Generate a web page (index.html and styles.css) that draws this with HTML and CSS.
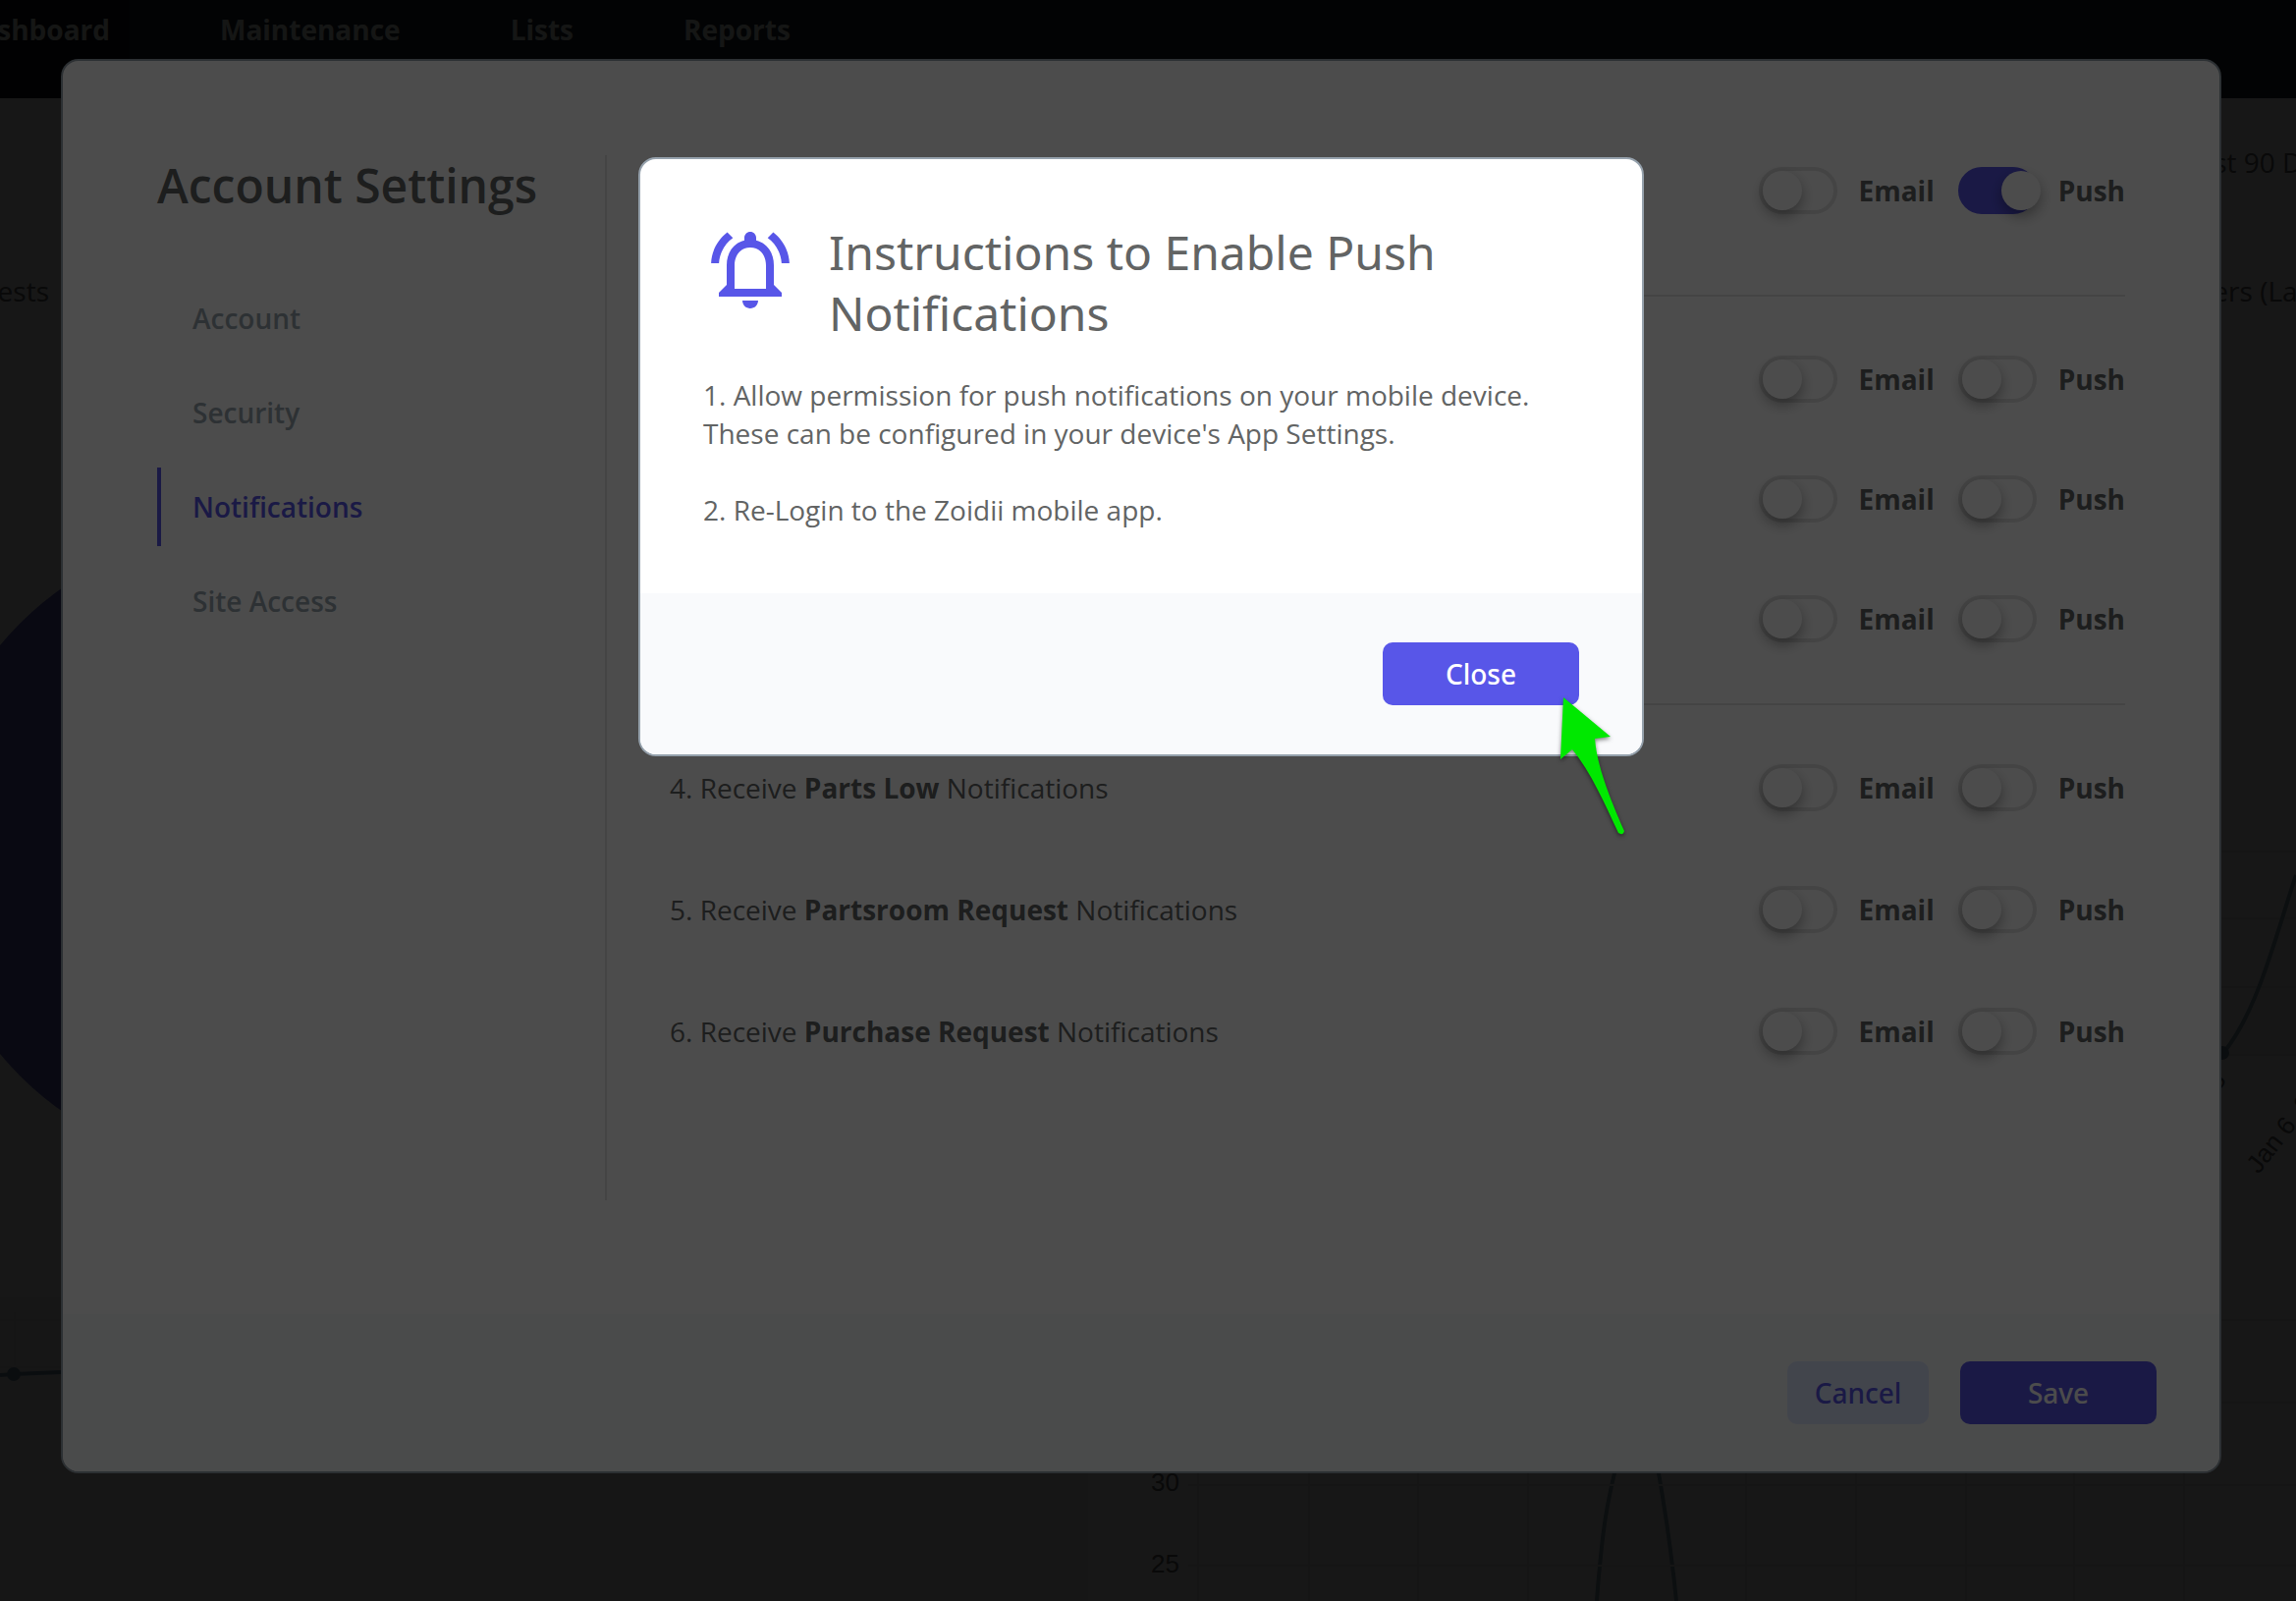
FILE: index.html
```html
<!DOCTYPE html>
<html lang="en">
<head>
<meta charset="utf-8">
<title>Account Settings</title>
<link rel="stylesheet" href="styles.css">
</head>
<body>
<div class="dashboard">
  <header class="topbar">
    <nav class="topnav">
      <a class="topnav-link topnav-current" href="#">Dashboard</a>
      <a class="topnav-link" href="#">Maintenance</a>
      <a class="topnav-link" href="#">Lists</a>
      <a class="topnav-link" href="#">Reports</a>
    </nav>
  </header>
  <div class="filters"><span class="range">Last 90 Days</span></div>
  <div class="card-heads">
    <h2 class="clip-start">Requests</h2>
    <h2 class="clip-end">Orders (Last</h2>
  </div>
  <div class="charts">
    <svg class="pie" width="652" height="652" viewBox="0 0 652 652" aria-hidden="true"><circle cx="326" cy="326" r="326" fill="#6465c4"/></svg>
    <svg class="line-chart" width="84" height="560" viewBox="0 0 84 560" aria-hidden="true">
      <path d="M10 392C45 350 64 270 84 211V394H10Z" fill="#f0f0f0"/>
      <path d="M0 187H84M0 255H84M0 325H84M0 394H84" stroke="#e6e6e6" stroke-width="2"/>
      <path d="M10 392C45 350 64 270 84 211" fill="none" stroke="#85a0b5" stroke-width="4"/>
      <circle cx="9" cy="392" r="7" fill="#7090aa"/>
      <text class="axis" text-anchor="end" transform="translate(14 420) rotate(-52)">Jan 5, 2023</text>
      <text class="axis" transform="translate(46 516) rotate(-52)">Jan 6, 2023</text>
    </svg>
  </div>
  <div class="lower">
    <svg class="trend" width="1080" height="310" viewBox="0 0 1080 310" aria-hidden="true">
      <path d="M0 24H1080M0 72H1080" stroke="#e4e4e4" stroke-width="2"/>
      <path d="M15 16V70" stroke="#e4e4e4" stroke-width="2"/>
      <path d="M0 80L14 79L62 77" fill="none" stroke="#7090aa" stroke-width="4"/>
      <circle cx="14" cy="79" r="7" fill="#7090aa"/>
    </svg>
    <svg class="peak" width="1230" height="310" viewBox="-30 0 1230 310" aria-hidden="true">
      <path d="M488 310C494 230 500 205 506 180C515 110 542 110 551 180C558 220 564 260 569 310" fill="#f4f4f4" stroke="#85a0b5" stroke-width="4"/>
      <path d="M72 24H1200M72 108H1200M72 192H1200M72 274H1200M82 0V310M195 0V310M306 0V310M418 0V310M640 0V310M752 0V310M864 0V310M974 0V310M1086 0V310" stroke="#e4e4e4" stroke-width="2"/>
      <text class="axis" x="34" y="198">30</text>
      <text class="axis" x="34" y="281">25</text>
    </svg>
  </div>
</div>

<div class="overlay">
  <section class="dialog settings" role="dialog" aria-labelledby="settings-title">
    <div class="settings-body">
      <aside class="sidebar">
        <h1 class="title title-strong" id="settings-title">Account Settings</h1>
        <nav class="tabs">
          <a class="tab" href="#">Account</a>
          <a class="tab" href="#">Security</a>
          <a class="tab tab-active" href="#" aria-current="page">Notifications</a>
          <a class="tab" href="#">Site Access</a>
        </nav>
      </aside>
      <form class="options">
        <div class="group">
          <div class="row"><span class="switches"><label class="switch"><input type="checkbox">Email</label><label class="switch"><input type="checkbox" checked>Push</label></span></div>
        </div>
        <div class="group">
          <div class="row"><span class="switches"><label class="switch"><input type="checkbox">Email</label><label class="switch"><input type="checkbox">Push</label></span></div>
          <div class="row"><span class="switches"><label class="switch"><input type="checkbox">Email</label><label class="switch"><input type="checkbox">Push</label></span></div>
          <div class="row"><span class="switches"><label class="switch"><input type="checkbox">Email</label><label class="switch"><input type="checkbox">Push</label></span></div>
        </div>
        <div class="group group-last">
          <div class="row"><span>4. Receive <b>Parts Low</b> Notifications</span><span class="switches"><label class="switch"><input type="checkbox">Email</label><label class="switch"><input type="checkbox">Push</label></span></div>
          <div class="row"><span>5. Receive <b>Partsroom Request</b> Notifications</span><span class="switches"><label class="switch"><input type="checkbox">Email</label><label class="switch"><input type="checkbox">Push</label></span></div>
          <div class="row"><span>6. Receive <b>Purchase Request</b> Notifications</span><span class="switches"><label class="switch"><input type="checkbox">Email</label><label class="switch"><input type="checkbox">Push</label></span></div>
        </div>
      </form>
    </div>
    <footer class="actions">
      <button class="button button-quiet" type="button">Cancel</button>
      <button class="button" type="button">Save</button>
    </footer>
  </section>
</div>

<div class="overlay overlay-front">
  <section class="dialog notice" role="dialog" aria-labelledby="notice-title">
    <div class="notice-body">
      <div class="notice-head">
        <svg class="bell" width="96" height="96" viewBox="0 0 24 24" fill="#5856e8" aria-hidden="true">
          <path d="M12 22c1.100 0 2-.9 2-2h-4c0 1.100.9 2 2 2zm6-6v-5c0-3.070-1.630-5.640-4.500-6.320V4c0-.83-.67-1.500-1.500-1.500s-1.500.67-1.500 1.500v.68C7.640 5.360 6 7.920 6 11v5l-2 2v1h16v-1l-2-2zm-2 1H8v-6c0-2.480 1.510-4.500 4-4.500s4 2.020 4 4.500v6zM7.580 4.080L6.150 2.650C3.750 4.480 2.170 7.300 2.030 10.500h2c.15-2.650 1.510-4.970 3.550-6.420zm12.390 6.420h2c-.15-3.200-1.730-6.020-4.120-7.850l-1.420 1.430c2.020 1.450 3.390 3.770 3.540 6.420z"/>
        </svg>
        <h2 class="title" id="notice-title">Instructions to Enable Push Notifications</h2>
      </div>
      <p>1. Allow permission for push notifications on your mobile device. These can be configured in your device's App Settings.</p>
      <p>2. Re-Login to the Zoidii mobile app.</p>
    </div>
    <footer class="actions actions-roomy">
      <button class="button" type="button">Close</button>
      <svg class="pointer" width="80" height="150" viewBox="0 0 80 150" aria-hidden="true">
        <path d="M12 8L60 48L44 50C46 76 58 108 74 144Q73 149 68 146C54 116 40 84 21 61L9 71Z" fill="#00e800"/>
      </svg>
    </footer>
  </section>
</div>
</body>
</html>
```
FILE: styles.css
```css
* { box-sizing: border-box; }

body {
  margin: 0;
  min-height: 100vh;
  overflow: hidden;
  font-family: "Open Sans", "Noto Sans", sans-serif;
  font-size: 28px;
  line-height: 39px;
  color: #626464;
}

a { color: inherit; text-decoration: none; }
h1, h2, p { margin: 0; font-weight: 400; }

/* Dashboard behind the dialogs */
.dashboard {
  height: 100vh;
  overflow: hidden;
  background: #fff;
  color: #606060;
}
.topbar { height: 100px; background: #1c242e; }
.topnav { display: flex; height: 100px; }
.topnav-link {
  padding: 11px 56px 0;
  font-weight: 700;
  color: #e8f0e8;
}
.topnav-current {
  display: flex;
  justify-content: flex-end;
  width: 132px;
  margin-right: 36px;
  padding: 11px 20px 0 0;
  background: #0c1016;
}
.filters {
  display: flex;
  justify-content: flex-end;
  height: 100px;
  padding-top: 46px;
}
.card-heads {
  display: flex;
  justify-content: space-between;
  height: 180px;
  padding-top: 77px;
  background: #f8f8f8;
}
.card-heads h2 { font-size: 28px; }
.clip-start {
  display: flex;
  justify-content: flex-end;
  width: 50px;
}
.clip-end { width: 135px; white-space: nowrap; }
.range { width: 114px; white-space: nowrap; }
.charts {
  display: flex;
  justify-content: space-between;
  align-items: flex-start;
  height: 940px;
  padding-top: 159px;
}
.pie { margin-left: -75px; }
.line-chart { margin-top: 141px; overflow: visible; }
.lower {
  display: flex;
  justify-content: space-between;
  background: #f2f2f2;
}
.peak { background: #fff; }
.axis { font: 26px "Liberation Sans", sans-serif; fill: #606060; }

/* Dialogs */
.overlay {
  position: fixed;
  inset: 0;
  display: flex;
  justify-content: center;
  align-items: flex-start;
  padding: 60px 76px 60px 62px;
  background: rgba(0, 0, 0, .7);
}
.overlay-front { padding-top: 160px; }
.dialog {
  border: 2px solid #95a1ac;
  border-radius: 18px;
  background: #fff;
}
.settings { width: 100%; max-width: 2200px; }
.notice { width: 1024px; }

.title {
  font-family: "Noto Sans", sans-serif;
  font-size: 48px;
  line-height: 62px;
}
.title-strong {
  font-family: "Open Sans", sans-serif;
  font-weight: 600;
}

.actions {
  position: relative;
  display: flex;
  justify-content: flex-end;
  gap: 32px;
  padding: 48px 64px;
  border-radius: 0 0 16px 16px;
  background: #f9fafc;
}
.actions-roomy { padding-block: 50px; }
.button {
  min-width: 200px;
  height: 64px;
  border: 0;
  border-radius: 10px;
  background: #5856e8;
  color: #fff;
  font: 500 28px "Noto Sans", sans-serif;
}
.button-quiet { min-width: 144px; background: #dce7ff; color: #5856e8; }

/* Account settings */
.settings-body {
  display: flex;
  min-height: 1276px;
  padding: 96px 96px 116px;
}
.sidebar {
  width: 458px;
  border-right: 2px solid #e4e4e4;
}
.tabs {
  display: flex;
  flex-direction: column;
  gap: 16px;
  margin-top: 64px;
}
.tab {
  padding: 20px 32px;
  border-left: 4px solid transparent;
  font-weight: 600;
  line-height: 40px;
  color: #98a6ae;
}
.tab-active { border-color: #5856e8; color: #5856e8; }

.options { flex: 1; padding-left: 64px; }
.group {
  display: flex;
  flex-direction: column;
  gap: 50px;
  padding-bottom: 50px;
}
.group:first-child { padding-bottom: 70px; }
.group + .group { padding-top: 48px; border-top: 2px solid #e4e4e4; }
.group-last { gap: 52px; }
.row {
  display: flex;
  justify-content: space-between;
  align-items: center;
  height: 72px;
}
.switches { display: flex; gap: 24px; margin-left: auto; }
.switch {
  display: flex;
  align-items: center;
  gap: 22px;
  font-weight: 700;
}
.switch input {
  appearance: none;
  width: 80px;
  height: 48px;
  margin: 0;
  border: 4px solid #e4e4e4;
  border-radius: 24px;
}
.switch input::before {
  content: "";
  display: block;
  width: 40px;
  height: 40px;
  border-radius: 50%;
  background: #fff;
  box-shadow: 0 6px 14px rgba(0, 0, 0, .35);
}
.switch input:checked { border-color: #5856e8; background: #5856e8; }
.switch input:checked::before { margin-left: 40px; }

/* Push instructions */
.notice-body { padding: 64px 64px 65px; }
.notice-head { display: flex; gap: 32px; margin-bottom: 33px; }
.bell { flex-shrink: 0; }
.notice-body p + p { margin-top: 39px; }
.pointer {
  position: absolute;
  right: 12px;
  top: 98px;
  filter: drop-shadow(0 2px 2px rgba(0, 0, 0, .5));
}
```
